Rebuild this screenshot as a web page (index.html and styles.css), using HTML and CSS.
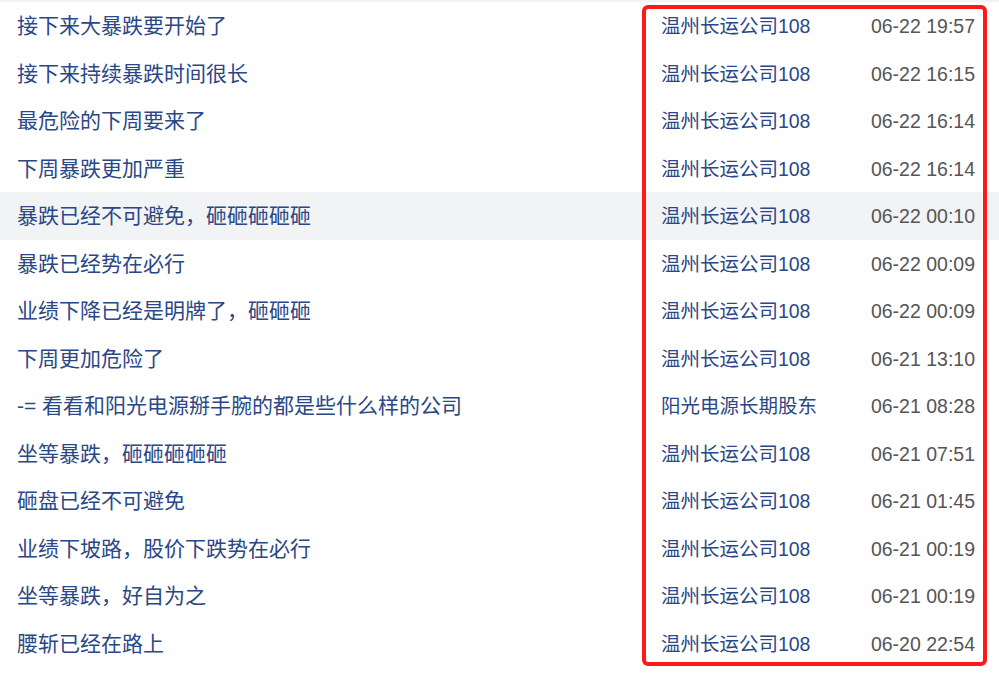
FILE: index.html
```html
<!DOCTYPE html>
<html lang="zh-CN">

<head>
    <meta charset="UTF-8">
    <meta name="viewport" content="width=device-width, initial-scale=1.0">
    <title>帖子列表</title>
    <link rel="stylesheet" href="styles.css">
</head>

<body>
    <div class="page">
        <ul class="post-list">
            <li class="post"><span class="title">接下来大暴跌要开始了</span><span class="author">温州长运公司108</span><span class="time">06-22 19:57</span></li>
            <li class="post"><span class="title">接下来持续暴跌时间很长</span><span class="author">温州长运公司108</span><span class="time">06-22 16:15</span></li>
            <li class="post"><span class="title">最危险的下周要来了</span><span class="author">温州长运公司108</span><span class="time">06-22 16:14</span></li>
            <li class="post"><span class="title">下周暴跌更加严重</span><span class="author">温州长运公司108</span><span class="time">06-22 16:14</span></li>
            <li class="post hover"><span class="title">暴跌已经不可避免，砸砸砸砸砸</span><span class="author">温州长运公司108</span><span class="time">06-22 00:10</span></li>
            <li class="post"><span class="title">暴跌已经势在必行</span><span class="author">温州长运公司108</span><span class="time">06-22 00:09</span></li>
            <li class="post"><span class="title">业绩下降已经是明牌了，砸砸砸</span><span class="author">温州长运公司108</span><span class="time">06-22 00:09</span></li>
            <li class="post"><span class="title">下周更加危险了</span><span class="author">温州长运公司108</span><span class="time">06-21 13:10</span></li>
            <li class="post"><span class="title">-= 看看和阳光电源掰手腕的都是些什么样的公司</span><span class="author">阳光电源长期股东</span><span class="time">06-21 08:28</span></li>
            <li class="post"><span class="title">坐等暴跌，砸砸砸砸砸</span><span class="author">温州长运公司108</span><span class="time">06-21 07:51</span></li>
            <li class="post"><span class="title">砸盘已经不可避免</span><span class="author">温州长运公司108</span><span class="time">06-21 01:45</span></li>
            <li class="post"><span class="title">业绩下坡路，股价下跌势在必行</span><span class="author">温州长运公司108</span><span class="time">06-21 00:19</span></li>
            <li class="post"><span class="title">坐等暴跌，好自为之</span><span class="author">温州长运公司108</span><span class="time">06-21 00:19</span></li>
            <li class="post"><span class="title">腰斩已经在路上</span><span class="author">温州长运公司108</span><span class="time">06-20 22:54</span></li>
        </ul>

        <!-- 标注框 -->
        <div class="mark"></div>
    </div>
</body>

</html>
```

FILE: styles.css
```css
* {
    margin: 0;
    padding: 0;
    box-sizing: border-box;
}

body {
    background-color: #fff;
    font-family: "Liberation Sans", "Noto Sans CJK SC", sans-serif;
}

.page {
    position: relative;
    width: 999px;
    height: 678px;
    overflow: hidden;
    border-top: 2px solid #f2f3f5;
}

.post-list {
    list-style: none;
}

.post {
    display: flex;
    align-items: baseline;
    height: 47.5px;
    line-height: 47.5px;
    padding: 0 24px 0 17px;
}

.post.hover {
    background-color: #f2f3f5;
}

.title {
    flex: 1;
    font-size: 21px;
    color: #2a4786;
    white-space: nowrap;
}

.author {
    width: 210px;
    font-size: 19.5px;
    color: #2a4786;
    white-space: nowrap;
}

.time {
    font-size: 19.5px;
    color: #555;
    text-align: right;
    white-space: nowrap;
}

.mark {
    position: absolute;
    left: 642px;
    top: 3px;
    width: 345px;
    height: 661px;
    border: 4px solid #ff1a1a;
    border-radius: 6px;
}
```
